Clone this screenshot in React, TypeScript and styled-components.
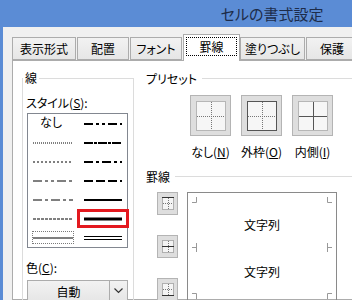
import styled, { createGlobalStyle } from "styled-components";

const GlobalStyle = createGlobalStyle`
  html, body {
    margin: 0;
    padding: 0;
    background: #f0f0f0;
  }
  body {
    font-family: "Noto Sans CJK JP", "Noto Sans", sans-serif;
    font-feature-settings: "palt";
    color: #000;
  }
`;

const Viewport = styled.div`
  width: 352px;
  height: 300px;
  overflow: hidden;
`;

const Dialog = styled.div`
  width: 544px;
  height: 300px;
  display: flex;
  flex-direction: column;
  background: #5b8cd5;
`;

const TitleBar = styled.div`
  flex: none;
  height: 27px;
  display: flex;
  align-items: center;
  justify-content: center;
  font-size: 15px;
  color: #1d2c4a;
`;

const Client = styled.div`
  flex: 1;
  min-height: 0;
  margin-left: 3px;
  padding: 7px 0 0 9px;
  background: #f0f0f0;
  display: flex;
  flex-direction: column;
`;

const TabStrip = styled.div`
  flex: none;
  height: 26px;
  display: flex;
  align-items: flex-end;
  position: relative;
  z-index: 1;
`;

const Tab = styled.div<{ $w: number; $active?: boolean }>`
  box-sizing: border-box;
  flex: none;
  width: ${(p) => p.$w}px;
  height: ${(p) => (p.$active ? 27 : 23)}px;
  margin-right: ${(p) => (p.$active ? 0 : 1)}px;
  margin-bottom: ${(p) => (p.$active ? -1 : 0)}px;
  border: 1px solid #acacac;
  border-bottom: ${(p) => (p.$active ? "none" : "1px solid #acacac")};
  background: ${(p) =>
    p.$active ? "#fff" : "linear-gradient(#f2f2f2, #e6e6e6)"};
  display: flex;
  align-items: center;
  justify-content: center;
  padding: ${(p) => (p.$active ? "2px 2px 5px" : "0")};
  font-size: 12px;
  line-height: 16px;
  white-space: nowrap;
`;

const FocusBox = styled.span`
  flex: 1;
  align-self: stretch;
  display: flex;
  align-items: center;
  justify-content: center;
  border: 1px dotted #000;
`;

const Panel = styled.div`
  flex: 1;
  min-height: 0;
  background: #fff;
  border: 1px solid #acacac;
  border-right: none;
  display: flex;
  align-items: flex-start;
  padding-top: 9px;
`;

const Group = styled.fieldset`
  box-sizing: border-box;
  flex: none;
  width: 112px;
  height: 260px;
  margin: 0 0 0 9px;
  padding: 0 4px;
  min-width: 0;
  border: 1px solid #dcdcdc;
  display: flex;
  flex-direction: column;
  align-items: flex-start;
`;

const Legend = styled.legend`
  margin-left: -4px;
  padding: 0 2px;
  font-size: 12px;
  line-height: 16px;
`;

const FieldLabel = styled.div<{ $top: number }>`
  margin: ${(p) => p.$top}px 0 0 -1px;
  font-size: 12px;
  line-height: 16px;
  white-space: nowrap;
`;

const StyleList = styled.div`
  box-sizing: border-box;
  width: 101px;
  height: 135px;
  margin: 2px 0 0 0;
  border: 1px solid #828790;
  display: grid;
  grid-template-columns: 50px 49px;
  grid-template-rows: repeat(7, 19px);
  grid-auto-flow: column;
`;

const StyleCell = styled.div<{ $marked?: boolean }>`
  box-sizing: border-box;
  display: flex;
  align-items: center;
  justify-content: center;
  font-size: 12px;
  line-height: 16px;
  ${(p) =>
    p.$marked &&
    `
    border: 3px solid #e3191f;
    margin-right: -2px;
    margin-left: -1px;
  `}
`;

const NoneLabel = styled.span`
  margin: -3px 0 0 -4px;
`;

const FocusItem = styled.div`
  box-sizing: border-box;
  width: 42px;
  height: 13px;
  border: 1px dotted #7a7a7a;
  display: flex;
  align-items: center;
  justify-content: center;
`;

const Combo = styled.div`
  box-sizing: border-box;
  width: 101px;
  height: 22px;
  margin-top: 4px;
  border: 1px solid #acacac;
  background: linear-gradient(#f2f2f2, #e6e6e6);
  display: flex;
`;

const ComboText = styled.div`
  flex: 1;
  display: flex;
  align-items: center;
  justify-content: center;
  font-size: 12px;
`;

const ComboButton = styled.div`
  width: 17px;
  border-left: 1px solid #acacac;
  display: flex;
  align-items: center;
  justify-content: center;
`;

const RightColumn = styled.div`
  flex: 1;
  margin-left: 12px;
  display: flex;
  flex-direction: column;
`;

const Heading = styled.div<{ $top?: number }>`
  display: flex;
  align-items: center;
  margin-top: ${(p) => p.$top ?? 0}px;
  height: 16px;
  font-size: 12px;
  white-space: nowrap;
  &::after {
    content: "";
    flex: 1;
    height: 1px;
    margin-left: 5px;
    background: #dcdcdc;
  }
`;

const PresetRow = styled.div`
  display: flex;
  gap: 10px;
  margin: 9px 0 0 44px;
`;

const PresetItem = styled.div`
  width: 41px;
  display: flex;
  flex-direction: column;
  align-items: center;
  gap: 8px;
  font-size: 12px;
  line-height: 16px;
  white-space: nowrap;
`;

const GrayButton = styled.div<{ $w: number; $h: number }>`
  box-sizing: border-box;
  width: ${(p) => p.$w}px;
  height: ${(p) => p.$h}px;
  border: 1px solid #b4b4b4;
  background: #dedede;
  display: flex;
  align-items: center;
  justify-content: center;
`;

const BorderArea = styled.div`
  display: flex;
  margin-top: 8px;
`;

const EdgeButtons = styled.div`
  display: flex;
  flex-direction: column;
  gap: 20px;
  margin-left: 11px;
`;

const Preview = styled.div`
  box-sizing: border-box;
  position: relative;
  width: 150px;
  height: 150px;
  margin-left: 9px;
  border: 1px solid #8a8a8a;
  display: flex;
  flex-direction: column;
  align-items: center;
  padding-top: 24px;
  gap: 31px;
  font-size: 12px;
  line-height: 16px;
`;

const Marks = styled.svg`
  position: absolute;
  left: -1px;
  top: -1px;
`;

type LineKind =
  | "hair"
  | "dot"
  | "dashDotDot"
  | "dashDot"
  | "dash"
  | "thin"
  | "mDashDotDot"
  | "slant"
  | "mDashDot"
  | "mDash"
  | "medium"
  | "thick"
  | "double";

const lineSpec: Record<LineKind, { w: number; dash?: string }> = {
  hair: { w: 1, dash: "1 1" },
  dot: { w: 1, dash: "2 2" },
  dashDotDot: { w: 1, dash: "9 3 3 3 3 3" },
  dashDot: { w: 1, dash: "9 3 3 3" },
  dash: { w: 1, dash: "3 1" },
  thin: { w: 1 },
  mDashDotDot: { w: 2, dash: "9 3 3 3 3 3" },
  slant: { w: 2, dash: "9 1 3 1" },
  mDashDot: { w: 2, dash: "9 3 3 3" },
  mDash: { w: 2, dash: "9 3" },
  medium: { w: 2 },
  thick: { w: 3 },
  double: { w: 1 },
};

const LineSample = ({ kind, width }: { kind: LineKind; width: number }) => {
  const s = lineSpec[kind];
  if (kind === "double") {
    return (
      <svg width={width} height={6}>
        <line x1={0} x2={width} y1={1.5} y2={1.5} stroke="#000" />
        <line x1={0} x2={width} y1={4.5} y2={4.5} stroke="#000" />
      </svg>
    );
  }
  return (
    <svg width={width} height={4}>
      <line
        x1={0}
        x2={width}
        y1={2}
        y2={2}
        stroke="#000"
        strokeWidth={s.w}
        strokeDasharray={s.dash}
      />
    </svg>
  );
};

const PresetIcon = ({ kind }: { kind: "none" | "outer" | "inside" }) => {
  const outer = kind === "outer";
  const inside = kind === "inside";
  return (
    <svg width={30} height={30}>
      <rect x={0} y={0} width={30} height={30} fill="#f6f6f6" />
      <rect
        x={0.5}
        y={0.5}
        width={29}
        height={29}
        fill="none"
        stroke={outer ? "#555" : "#777"}
        strokeDasharray={outer ? undefined : "1 1"}
      />
      <path
        d="M15.5 1V29M1 15.5H29"
        stroke={inside ? "#555" : "#777"}
        strokeDasharray={inside ? undefined : "1 1"}
      />
    </svg>
  );
};

const EdgeIcon = ({ pos }: { pos: "top" | "middle" | "bottom" }) => {
  const y = pos === "top" ? 0.5 : pos === "middle" ? 6.5 : 12.5;
  return (
    <svg width={12} height={13}>
      <rect x={0.5} y={0.5} width={11} height={12} fill="#f4f4f4" stroke="#777" strokeDasharray="1 1" />
      <path d="M6.5 1V12M1 6.5H11" stroke="#777" strokeDasharray="1 1" />
      <line x1={0} x2={12} y1={y} y2={y} stroke="#333" />
    </svg>
  );
};

const tabs = [
  { label: "表示形式", w: 64 },
  { label: "配置", w: 52 },
  { label: "フォント", w: 52 },
  { label: "罫線", w: 57, active: true },
  { label: "塗りつぶし", w: 65 },
  { label: "保護", w: 52 },
];

const leftCol: (LineKind | "none")[] = ["none", "hair", "dot", "dashDotDot", "dashDot", "dash", "thin"];
const rightCol: LineKind[] = ["mDashDotDot", "slant", "mDashDot", "mDash", "medium", "thick", "double"];

export default function App() {
  return (
    <Viewport>
      <GlobalStyle />
      <Dialog>
        <TitleBar>セルの書式設定</TitleBar>
        <Client>
          <TabStrip>
            {tabs.map((t) => (
              <Tab key={t.label} $w={t.w} $active={t.active}>
                {t.active ? <FocusBox>{t.label}</FocusBox> : t.label}
              </Tab>
            ))}
          </TabStrip>
          <Panel>
            <Group>
              <Legend>線</Legend>
              <FieldLabel $top={9}>
                スタイル(<u>S</u>):
              </FieldLabel>
              <StyleList>
                {leftCol.map((k, i) => (
                  <StyleCell key={"l" + i}>
                    {k === "none" ? (
                      <NoneLabel>なし</NoneLabel>
                    ) : k === "thin" ? (
                      <FocusItem>
                        <LineSample kind="thin" width={40} />
                      </FocusItem>
                    ) : (
                      <LineSample kind={k} width={40} />
                    )}
                  </StyleCell>
                ))}
                {rightCol.map((k, i) => (
                  <StyleCell key={"r" + i} $marked={k === "thick"}>
                    <LineSample kind={k} width={38} />
                  </StyleCell>
                ))}
              </StyleList>
              <FieldLabel $top={12}>
                色(<u>C</u>):
              </FieldLabel>
              <Combo>
                <ComboText>自動</ComboText>
                <ComboButton>
                  <svg width={9} height={6}>
                    <path d="M0.5 0.5L4.5 4.5L8.5 0.5" fill="none" stroke="#333" strokeWidth={1.2} />
                  </svg>
                </ComboButton>
              </Combo>
            </Group>
            <RightColumn>
              <Heading>プリセット</Heading>
              <PresetRow>
                <PresetItem>
                  <GrayButton $w={41} $h={41}>
                    <PresetIcon kind="none" />
                  </GrayButton>
                  <span>
                    なし(<u>N</u>)
                  </span>
                </PresetItem>
                <PresetItem>
                  <GrayButton $w={41} $h={41}>
                    <PresetIcon kind="outer" />
                  </GrayButton>
                  <span>
                    外枠(<u>O</u>)
                  </span>
                </PresetItem>
                <PresetItem>
                  <GrayButton $w={41} $h={41}>
                    <PresetIcon kind="inside" />
                  </GrayButton>
                  <span>
                    内側(<u>I</u>)
                  </span>
                </PresetItem>
              </PresetRow>
              <Heading $top={8}>罫線</Heading>
              <BorderArea>
                <EdgeButtons>
                  <GrayButton $w={21} $h={23}>
                    <EdgeIcon pos="top" />
                  </GrayButton>
                  <GrayButton $w={21} $h={23}>
                    <EdgeIcon pos="middle" />
                  </GrayButton>
                  <GrayButton $w={21} $h={23}>
                    <EdgeIcon pos="bottom" />
                  </GrayButton>
                </EdgeButtons>
                <Preview>
                  <Marks width={150} height={150}>
                    <path
                      d="M5 10.5H9.5V5M145 10.5H140.5V5M5 55.5H9.5M9.5 51V60M145 55.5H140.5M140.5 51V60M5 101.5H9.5V107M145 101.5H140.5V107"
                      fill="none"
                      stroke="#999"
                    />
                  </Marks>
                  <span>文字列</span>
                  <span>文字列</span>
                </Preview>
              </BorderArea>
            </RightColumn>
          </Panel>
        </Client>
      </Dialog>
    </Viewport>
  );
}
